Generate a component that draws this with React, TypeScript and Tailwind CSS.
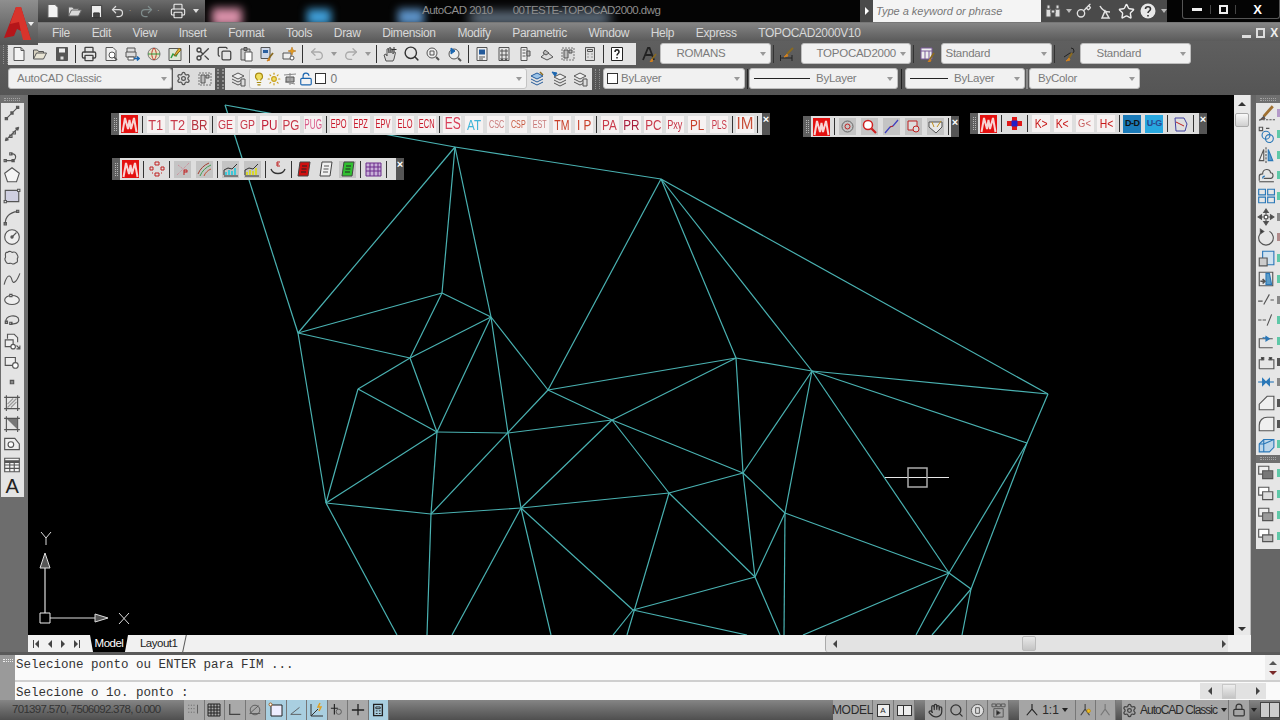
import React from "react";
import { Search, Scissors, Copy, Undo2, Redo2, Printer, Lightbulb, Sun, LockOpen, Settings, Star, Key, Hand, Lock } from "lucide-react";

const S = ({ children, size = 16, box = "0 0 16 16" }: { children: React.ReactNode; size?: number; box?: string }) => (
  <svg width={size} height={size} viewBox={box} fill="none" stroke="#555" strokeWidth="1" className="shrink-0">
    {children}
  </svg>
);

const Doc = () => <S><path d="M3 1.5h7l3 3v10H3z" fill="#f4f4f4" /><path d="M10 1.5v3h3" /></S>;
const Folder = () => <S><path d="M1.5 13V4h4l1 1.5h5V7" fill="#d8d2c0" /><path d="M1.5 13l3-6h10l-3 6z" fill="#e8e4d4" /></S>;
const Floppy = () => <S><path d="M2.5 1.5h11v13h-11z" fill="#555" /><path d="M4.5 2v5h7V2z" fill="#eee" /><path d="M6 10h4v4H6z" fill="#ddd" /></S>;
const Preview = () => <S><path d="M3 1.5h7l3 3v10H3z" fill="#f0f0f0" /><circle cx="9" cy="9" r="3" fill="#fff" /><path d="M11 11l3 3" strokeWidth="1.6" /></S>;
const Publish = () => <S><path d="M3 6V2h8v4M2 6h10v5H2z" fill="#ddd" /><path d="M4 11h6v3H4z" fill="#fff" /><path d="M10 12.5h5M13 10.5l2 2-2 2" stroke="#1b66b0" strokeWidth="1.6" /></S>;
const Globe = () => <S><circle cx="8" cy="8" r="6" fill="#e9e2c6" stroke="#777" /><path d="M8 2c-3 3-3 9 0 12M8 2c3 3 3 9 0 12" stroke="#c0392b" /><path d="M2 8h12" stroke="#2f9c3f" /></S>;
const Markup = () => <S><path d="M2 2.5h12v12H2z" fill="#dfe8d8" stroke="#555" /><path d="M4 12l2-4 3 2 4-7" stroke="#2f9c3f" strokeWidth="1.5" /><path d="M12 2l2 2-5 5-2 1 1-2z" fill="#e0b030" stroke="#8a6a20" /></S>;
const Paste = () => <S><path d="M3 3h9v11H3z" fill="#ccc" /><path d="M6 1.5h3v3H6z" fill="#888" /><path d="M7 6h7v9H7z" fill="#fff" /></S>;
const Match = () => <S><path d="M2 1.5h9v11H2z" fill="#cfd8e8" /><path d="M4 4h5v3H4z" fill="#2a5fa0" stroke="none" /><path d="M14 7l-4 5" stroke="#8a6a20" strokeWidth="1.8" /><path d="M10 12l-2 3 3-1z" fill="#d08020" stroke="#d08020" /></S>;
const Block = () => <S><path d="M2 7h8v6H2z" fill="#eee" /><circle cx="11" cy="12" r="2" fill="#fff" /><path d="M11 1l1 3 3 1-3 1-1 3-1-3-3-1 3-1z" fill="#e09a20" stroke="#b06a10" strokeWidth=".5" /></S>;
const PanRT = () => <S><path d="M4 15L2 9l2-1 1 2V3l1.500-.5L7 7V2l1.500-.5L9 7V3l1.500 0L11 8l1-2 1.500.5L12 13l-1 2z" fill="#d8d8d8" /><path d="M12 1v5M9.500 3.500h5" stroke="#333" /></S>;
const ZoomW = () => <S><circle cx="7" cy="7" r="5" fill="#eee" /><path d="M5 5h4v4H5z" /><path d="M11 11l3 3" strokeWidth="2" /></S>;
const ZoomP = () => <S><circle cx="7" cy="8" r="5" fill="#eee" /><path d="M11 12l3 3" strokeWidth="2" /><path d="M4 2l4 3-4 3z" fill="#1b66b0" stroke="#1b66b0" /></S>;
const Props = () => <S><path d="M3 1.500h10v13H3z" fill="#eee" /><path d="M5 3.500h6v5H5z" fill="#245a9a" stroke="none" /><path d="M5 11h6M5 13h4" /></S>;
const Grid = () => <S><path d="M3 1.500h10v13H3zM5 4h2v2H5zM9 4h2v2H9zM5 8h2v2H5zM9 8h2v2H9zM5 12h2v1.500H5zM9 12h2v1.500H9z" fill="#e4e4e4" /></S>;
const Palette = () => <S><path d="M4 1.500h6v13H4z" fill="#eee" /><path d="M10 5h3v5h-3z" fill="#bbb" /><path d="M5.500 4h3M5.500 7h3M5.500 10h3" /></S>;
const Sheet = () => <S><path d="M2 11l6-5 6 5-6 3z" fill="#ddd" /><path d="M6 4l4 3-3 2-3-2z" fill="#bbb" /></S>;
const Calc = () => <S><path d="M3.500 1.500h9v13h-9z" fill="#ddd" /><path d="M5.500 3.500h5v2h-5zM5.500 8h1M9.500 8h1M5.500 11h1M9.500 11h1" /></S>;
const Help = () => <S><path d="M2.500 1.500h11v13h-11z" fill="#fff" stroke="#222" /><path d="M6 6c0-3 4-3 4 0 0 1.500-2 1.500-2 3.500M8 11v1.500" stroke="#222" strokeWidth="1.500" /></S>;
const TextStyle = () => <S><path d="M2 14L7 2h1.500L13 14M4.500 9h6" stroke="#222" strokeWidth="1.800" /><path d="M15 8l-4 5" stroke="#8a6a20" strokeWidth="1.600" /><path d="M11 13l-2 3 3-1z" fill="#d08020" stroke="#d08020" /></S>;
const DimStyle = () => <S><path d="M1.500 9v6M13 9v6M2 12h11" stroke="#222" /><path d="M14 2l-6 6" stroke="#8a6a20" strokeWidth="2" /><path d="M8 8l-3 3 4-1z" fill="#d08020" stroke="#d08020" /></S>;
const TableStyle = () => <S><path d="M2 2h11v11H2zM2 5h11M6 5v8M10 5v8" fill="#eee" stroke="#7a5a9a" /><path d="M15 7l-4 6" stroke="#8a6a20" strokeWidth="1.800" /><path d="M11 13l-2 3 3-1z" fill="#d08020" stroke="#d08020" /></S>;
const MleaderStyle = () => <S><path d="M11 2a3 3 0 0 1 3 3c0 2-2 3-4 2L4 11" stroke="#222" /><path d="M12 7l-3 5" stroke="#8a6a20" strokeWidth="2" /><path d="M9 12l-3 3 4-1z" fill="#d08020" stroke="#d08020" /></S>;
const Workspace = () => <S><path d="M2 2h12v12H2z" stroke="#777" strokeDasharray="2 1" fill="#ddd" /><path d="M4 4h4v8H4zM9 4h3v3H9z" fill="#bbb" /></S>;
const LayerP = () => <S><path d="M2 5l6-3 6 3-6 3z" fill="#eee" /><path d="M2 8l6 3 6-3M2 11l6 3 6-3" /><path d="M11 8h4v7h-4z" fill="#ddd" /></S>;
const LayerA = () => <S><path d="M2 5l6-3 6 3-6 3z" fill="#9cc4e8" stroke="#245a9a" /><path d="M2 8l6 3 6-3M2 11l6 3 6-3" stroke="#245a9a" /><path d="M11 1l3 3" stroke="#8a6a20" strokeWidth="1.500" /></S>;
const LayerB = () => <S><path d="M3 6l6-3 6 3-6 3z" fill="#eee" /><path d="M3 9l6 3 6-3M3 12l6 3 6-3" /><path d="M1 1l5 1-2 3z" fill="#1b66b0" stroke="#1b66b0" /></S>;
const Freeze = () => <S><path d="M4 6h8v5H4z" fill="#aaa" /><path d="M2 4l12-1M8 2v12M3 11l10 2" stroke="#888" /></S>;

const PLAIN = "w-[21.5px] h-full flex items-center justify-center shrink-0";

const Btn = ({ children }: { children: React.ReactNode }) => <div className={PLAIN}>{children}</div>;
const Sep = () => (
  <div className="w-[6px] h-full flex items-center justify-center shrink-0">
    <div className="w-px h-[18px] bg-[#333]" />
  </div>
);
const Caret = ({ w = "w-[12px]", color = "border-t-[#999]" }: { w?: string; color?: string }) => (
  <div className={`${w} h-full flex items-center justify-center shrink-0`}>
    <div className={`w-0 h-0 border-l-[3px] border-r-[3px] border-t-[4px] border-l-transparent border-r-transparent ${color}`} />
  </div>
);

const Combo = ({ w, children, align = "pl-2" }: { w: string; children: React.ReactNode; align?: string }) => (
  <div className={`${w} h-[21px] shrink-0 bg-[#f1f1f1] rounded-[3px] border border-[#bdbdbd] flex items-center text-[11.500px] tracking-[-0.25px] text-[#7b7b7b] ${align}`}>
    <div className="flex-1 flex items-center min-w-0 whitespace-nowrap">{children}</div>
    <Caret w="w-[14px]" />
  </div>
);

const Grip = () => <div className="w-[5px] h-[20px] shrink-0 border-x border-dotted border-[#8f8f8f]" />;

const QuickIcon = ({ children }: { children: React.ReactNode }) => <div className="w-[21.700px] h-full flex items-center justify-center shrink-0">{children}</div>;

const TitleBar = () => (
  <div className="relative h-[23px] shrink-0 bg-[#040404] flex items-center overflow-hidden border-b border-[#777]">
    <div className="absolute left-[212px] top-[8px] w-[30px] h-[18px] bg-[#d88fa8] blur-[4px]" />
    <div className="absolute left-[307px] top-[9px] w-[24px] h-[16px] bg-[#3f9ed8] blur-[4px]" />
    <div className="absolute left-[398px] top-[9px] w-[26px] h-[16px] bg-[#5d93c8] blur-[4px]" />
    <div className="absolute left-[470px] top-[12px] w-[140px] h-[12px] bg-[#6d7e90] blur-[6px]" />
    <div className="ml-[38px] w-[167px] h-[22px] shrink-0 bg-gradient-to-b from-[#6c6c6c] to-[#3b3b3b] flex items-center pl-[4px]">
      <QuickIcon><svg width="16" height="16" viewBox="0 0 16 16" fill="#f3f3f3" stroke="#666"><path d="M3 1.500h7l3 3v10H3z" /></svg></QuickIcon>
      <QuickIcon><svg width="16" height="16" viewBox="0 0 16 16" fill="#d9d9d9" stroke="#666"><path d="M1.500 13V4h4l1 1.500h5V7M1.500 13l3-6h10l-3 6z" /></svg></QuickIcon>
      <QuickIcon><svg width="15" height="15" viewBox="0 0 16 16" fill="#ececec" stroke="#333"><path d="M2.500 1.500h11v13h-11z" /><path d="M5 9.500h6v5H5z" fill="#444" /></svg></QuickIcon>
      <QuickIcon><Undo2 size={15} color="#dcdcdc" strokeWidth={2} /></QuickIcon>
      <div className="w-[6.500px] text-[8px] text-[#aaa] leading-none">·</div>
      <QuickIcon><Redo2 size={15} color="#7f8c8c" strokeWidth={2} /></QuickIcon>
      <div className="w-[10px] text-[8px] text-[#aaa] leading-none">·</div>
      <QuickIcon><Printer size={16} color="#f0f0f0" strokeWidth={1.6} /></QuickIcon>
      <div className="w-0 h-0 ml-[4px] border-l-[3px] border-r-[3px] border-t-[4px] border-l-transparent border-r-transparent border-t-[#ddd]" />
    </div>
    <div className="relative ml-[217px] w-[240px] whitespace-nowrap text-[11.500px] text-[#8e8e8e] flex">
      <span className="tracking-[-0.5px]">AutoCAD 2010</span>
      <span className="ml-[20px] tracking-[-0.55px]">00TESTE-TOPOCAD2000.dwg</span>
    </div>
    <div className="relative ml-[198px] w-[307px] h-[22px] shrink-0 bg-[#4a4a4a] flex items-center">
      <div className="w-[13px] flex justify-center">
        <div className="w-0 h-0 border-y-[4px] border-l-[4px] border-y-transparent border-l-white" />
      </div>
      <div className="w-[168px] h-full bg-[#f4f4f4] flex items-center pl-[3px] text-[11px] italic text-[#777] whitespace-nowrap">Type a keyword or phrase</div>
      <div className="flex items-center flex-1 pl-[3px] gap-[4px] text-[#e6e6e6]">
        <svg width="18" height="16" viewBox="0 0 18 16" fill="#ddd" stroke="#555"><path d="M2 6h5v8H2zM11 6h5v8h-5zM3 2h3v4H3zM12 2h3v4h-3zM7 7h4v3H7z" /></svg>
        <Caret w="w-[6px]" color="border-t-[#bbb]" />
        <Key size={16} color="#e2e2e2" />
        <svg width="18" height="18" viewBox="0 0 18 18" fill="none" stroke="#e2e2e2" strokeWidth="1.500"><path d="M4 4c2 4 6 6 10 6M9 9l-3 7h7z" /></svg>
        <Star size={17} color="#eee" strokeWidth={2} />
        <svg width="18" height="18" viewBox="0 0 18 18"><circle cx="9" cy="9" r="7.500" fill="#e8e8e8" /><path d="M6.500 7c0-3 5-3 5 0 0 2-2.500 2-2.500 4M9 13v1.500" stroke="#333" strokeWidth="1.600" fill="none" /></svg>
        <Caret w="w-[6px]" color="border-t-[#bbb]" />
      </div>
    </div>
    <div className="relative ml-[15px] w-[98px] h-[19px] self-start shrink-0 border border-[#555] border-t-0 rounded-b-[3px] flex items-center text-white">
      <div className="w-[27px] flex justify-center"><div className="w-[10px] h-[3px] bg-[#eee]" /></div>
      <div className="w-[26px] flex justify-center border-x border-[#444]"><div className="w-[9px] h-[9px] border-2 border-[#eee]" /></div>
      <div className="flex-1 text-center text-[13px] font-bold leading-none">X</div>
    </div>
  </div>
);

const MENU = ["File", "Edit", "View", "Insert", "Format", "Tools", "Draw", "Dimension", "Modify", "Parametric", "Window", "Help", "Express", "TOPOCAD2000V10"];

const MenuBar = () => (
  <div className="h-[18px] shrink-0 pt-[2px] bg-gradient-to-b from-[#858585] to-[#5b5b5b] flex items-center pl-[52px] gap-[21.700px] text-[12px] tracking-[-0.35px] text-[#d8d8d8]">
    {MENU.map((m) => <span key={m}>{m}</span>)}
    <div className="ml-auto mr-[2px] flex items-center gap-[5px]">
      <div className="w-[9px] h-[3px] bg-[#ddd] mt-[7px]" />
      <div className="w-[9px] h-[10px] border-2 border-[#ddd]" />
      <div className="text-[12px] font-bold text-[#eee] leading-none">X</div>
    </div>
  </div>
);

const Row1 = () => (
  <div className="h-[25px] flex items-center pl-[3px]">
    <Grip />
    <div className="h-[22px] flex items-center bg-[#e4e4e4] w-[628px] shrink-0">
      <Btn><Doc /></Btn><Btn><Folder /></Btn><Btn><Floppy /></Btn>
      <Sep />
      <Btn><Printer size={16} color="#444" /></Btn><Btn><Preview /></Btn><Btn><Publish /></Btn><Btn><Globe /></Btn><Btn><Markup /></Btn>
      <Sep />
      <Btn><Scissors size={16} color="#444" /></Btn><Btn><Copy size={15} color="#444" /></Btn><Btn><Paste /></Btn><Btn><Match /></Btn><Btn><Block /></Btn>
      <Sep />
      <div className="w-[22px] h-full flex items-center justify-center"><Undo2 size={16} color="#aaa" /></div>
      <Caret />
      <div className="w-[22px] h-full flex items-center justify-center"><Redo2 size={16} color="#aaa" /></div>
      <Caret />
      <Sep />
      <Btn><PanRT /></Btn><Btn><Search size={17} color="#333" strokeWidth={2} /></Btn><Btn><ZoomW /></Btn><Btn><ZoomP /></Btn>
      <Sep />
      <Btn><Props /></Btn><Btn><Grid /></Btn><Btn><Palette /></Btn><Btn><Sheet /></Btn><Btn><Workspace /></Btn><Btn><Calc /></Btn>
      <Sep />
      <Btn><Help /></Btn>
    </div>
    <div className="w-[2px] shrink-0" />
    <Btn><TextStyle /></Btn>
    <Combo w="w-[111px]" align="pl-[16px]">ROMANS</Combo>
    <Sep />
    <Btn><DimStyle /></Btn>
    <div className="w-[2.500px] shrink-0" />
    <Combo w="w-[110px]" align="pl-[15px]">TOPOCAD2000</Combo>
    <Sep />
    <Btn><TableStyle /></Btn>
    <div className="w-[2.500px] shrink-0" />
    <Combo w="w-[111px]" align="pl-[4px]">Standard</Combo>
    <Sep />
    <Btn><MleaderStyle /></Btn>
    <div className="w-[0.500px] shrink-0" />
    <Combo w="w-[111px]" align="pl-[16px]">Standard</Combo>
  </div>
);

const LineSample = ({ w }: { w: string }) => <div className={`${w} h-px bg-[#222] mr-[6px] shrink-0`} />;

const Row2 = () => (
  <div className="h-[25px] flex items-center pl-[8px]">
    <Combo w="w-[164px]">AutoCAD Classic</Combo>
    <div className="h-[22px] w-[42px] bg-[#dcdcdc] flex items-center justify-center gap-[6px] mx-[1px]">
      <Settings size={15} color="#555" />
      <Workspace />
    </div>
    <div className="w-[7px] h-[20px] mx-[1px] border-x-2 border-dotted border-[#8f8f8f] shrink-0" />
    <div className="h-[22px] w-[367px] shrink-0 bg-[#e2e2e2] flex items-center pl-[2px]">
      <Btn><LayerP /></Btn>
      <div className="w-[278px] h-[21px] shrink-0 bg-[#f3f3f3] rounded-[3px] border border-[#c4c4c4] flex items-center pl-[2px] gap-[1px] text-[12px] text-[#777]">
        <Lightbulb size={14} color="#a88a10" fill="#f0df60" />
        <Sun size={14} color="#c8a020" fill="#f0df60" />
        <Freeze />
        <LockOpen size={14} color="#1b66b0" />
        <div className="w-[11px] h-[11px] bg-white border border-[#333] ml-[1px]" />
        <span className="ml-[4px]">0</span>
        <div className="flex-1" />
        <Caret w="w-[14px]" />
      </div>
      <Btn><LayerA /></Btn><Btn><LayerB /></Btn><Btn><LayerP /></Btn>
    </div>
    <div className="w-[5px] h-[20px] mx-[3px] border-x border-dotted border-[#8f8f8f] shrink-0" />
    <Combo w="w-[142px]" align="pl-[3px]">
      <div className="w-[11px] h-[11px] bg-white border border-[#333] mr-[3px]" />ByLayer
    </Combo>
    <div className="w-px h-[20px] bg-[#222] mx-[1.500px] shrink-0" />
    <Combo w="w-[149px]" align="pl-[4px]"><LineSample w="w-[56px]" />ByLayer</Combo>
    <div className="w-px h-[20px] bg-[#222] mx-[3px] shrink-0" />
    <Combo w="w-[120px]" align="pl-[4px]"><LineSample w="w-[38px]" />ByLayer</Combo>
    <div className="w-[2px] h-[20px] bg-[#888] mx-[1px] shrink-0" />
    <Combo w="w-[111px]" align="pl-[8px]">ByColor</Combo>
  </div>
);

const L = (d: string, extra?: React.ReactNode) => (
  <S size={18}><path d={d} />{extra}</S>
);

const LEFT_ICONS: React.ReactNode[] = [
  L("M2.500 13.500L13.500 2.500M2 12h2v2H2zM7 7h2v2H7zM12 2h2v2h-2z"),
  L("M2 14L14 2M2 14l1-3M2 14l3-1M14 2l-3 1M14 2l-1 3M6 9h2v2H6zM9 6h2v2H9z"),
  L("M2 13h5a3 3 0 0 0 2-6H7M1 12h2v2H1zM6 6h2v2H6zM8 12h2v2H8z"),
  <S size={18}><path d="M8 1.500l6.500 5-2.500 7.500H4L1.500 6.500z" fill="#f5f5f5" /></S>,
  <S size={18}><path d="M2 3h12v10H2z" fill="#cfcfe0" /><path d="M1 12h2v2H1zM13 2h2v2h-2z" fill="#fff" /></S>,
  L("M2 14C2 8 6 4 13 3M1 13h2v2H1zM12 2h2v2h-2z"),
  <S size={18}><circle cx="8" cy="8" r="6.500" fill="#eee" /><path d="M8 8l4-4" /><circle cx="8" cy="8" r="1" fill="#555" /></S>,
  L("M4 3c2-2 4 0 4 0s3-1 4 1 2 3 1 4 1 3-1 4-3 2-4 1-4 1-5-1-2-3-1-4-1-4 1-5z"),
  L("M1 13C4 2 7 5 8 9s4 2 7-6"),
  <S size={18}><ellipse cx="8" cy="8" rx="6.500" ry="4" fill="#eee" /><path d="M6 3h2v2H6z" fill="#fff" /></S>,
  L("M3 10C0 4 14 2 14 8c0 3-4 4-7 3M2 9h2v2H2zM6 10h2v2H6z"),
  <S size={18}><path d="M4 6V2h6l3 3v4M2 7h7v6H2z" fill="#eee" /><circle cx="9" cy="13" r="2" fill="#fff" /><path d="M12 12l3 3M15 12v3h-3" /></S>,
  <S size={18}><path d="M2 4h9v7H2z" fill="#eee" /><circle cx="11" cy="11" r="2.500" fill="#fff" /></S>,
  <S size={18}><path d="M6.500 6.500h3v3h-3z" fill="#888" /></S>,
  <S size={18}><path d="M3 3h10v10H3zM1 3h14M1 13h14M3 1v14M13 1v14" /><path d="M4 9l5-5M4 12l8-8M7 12l5-5" stroke="#999" /></S>,
  <S size={18}><path d="M3 3h10v10H3zM1 3h14M1 13h14M3 1v14M13 1v14" /><path d="M3.500 3.500h9v9z" fill="#777" stroke="none" /></S>,
  <S size={18}><path d="M1.500 3h9l4 5v5h-13z" fill="#eee" /><circle cx="7" cy="8.500" r="2.500" fill="#fff" /></S>,
  <S size={18}><path d="M1.500 2h13v12h-13z" fill="#f5f5f5" /><path d="M1.500 5h13" strokeWidth="2.500" /><path d="M1.500 8h13M1.500 11h13M6 5v9M10 5v9" /></S>,
  <span className="text-[20px] leading-none text-[#222]">A</span>,
];

const Handle = ({ horizontal }: { horizontal?: boolean }) =>
  horizontal ? (
    <div className="h-[8px] w-full flex items-center justify-center bg-[#6f6f6f]">
      <div className="w-[16px] h-[3px] border-y border-dotted border-[#a4a4a4]" />
    </div>
  ) : (
    <div className="w-[8px] h-full shrink-0 bg-[#5f5f5f] flex items-center justify-center">
      <div className="w-[3px] h-[13px] border-x border-dotted border-[#b5b5b5]" />
    </div>
  );

const LeftBar = () => (
  <div className="w-[28px] shrink-0 bg-[#6d6d6d] flex flex-col pr-[4.500px] pl-[1px]">
    <Handle horizontal />
    <div className="h-[394px] bg-[#e4e4e4] flex flex-col items-center">
      {LEFT_ICONS.map((ic, i) => (
        <div key={i} className="h-[20.700px] w-full flex items-center justify-center">{ic}</div>
      ))}
    </div>
  </div>
);

// second column of the right bars is cut by the window edge
const Edge = ({ c }: { c: string }) => <div className={`w-[3px] h-[8px] shrink-0 ${c}`} />;

const RIGHT_TOP: [React.ReactNode, string][] = [
  [<S size={18}><path d="M2 14h14" strokeDasharray="2 1" /><path d="M14 2L6 11" stroke="#a07030" strokeWidth="2.500" /><path d="M6 11l-3 3 4-1z" fill="#b8391c" /></S>, "bg-[#b49ac8]"],
  [<S size={18}><path d="M2 2h3v3H2zM8 3h3" /><circle cx="8" cy="9" r="3.500" stroke="#2a78b8" /><circle cx="11" cy="12" r="3.500" stroke="#2a78b8" /></S>, "bg-[#5fc8a8]"],
  [<S size={18}><path d="M8 1v15" strokeDasharray="2 1" /><path d="M6 3v10H2z" fill="#eee" /><path d="M10 3v10h4z" fill="#5a9cc8" stroke="#2a78b8" /></S>, "bg-[#5fc8a8]"],
  [<S size={18}><path d="M2 13V9c0-2 2-2 3-2 0-5 7-5 7-1 3 0 3 5 0 5H6" /><path d="M2 14h13" /><path d="M5 11c0-2 1-2 2-2" stroke="#2a78b8" /></S>, "bg-[#5fc8a8]"],
  [<S size={18}><path d="M1.500 2h6v5h-6zM9.500 2h6v5h-6zM1.500 9h6v5h-6zM9.500 9h6v5h-6z" stroke="#2a78b8" /></S>, "bg-[#5fc8a8]"],
  [<S size={18}><path d="M8 1v14M1 8h14M8 1L6 4h4zM8 15l-2-3h4zM1 8l3-2v4zM15 8l-3-2v4z" fill="#333" /><path d="M6.500 6.500h3v3h-3z" fill="#fff" /></S>, "bg-[#888]"],
  [<S size={18}><path d="M11 3a6.500 6.500 0 1 1-6 0" /><path d="M3 1l3 2-3 2z" fill="#333" /></S>, "bg-[#b08a8a]"],
  [<S size={18}><path d="M5 2h10v12H5z" stroke="#2a78b8" fill="#cfe2f0" /><path d="M2 8h7v7H2z" fill="#ccc" /></S>, "bg-[#5fc8a8]"],
  [<S size={18}><path d="M2 2h12v12H2z" /><path d="M8 3h3l2 10H8z" fill="#5a9cc8" stroke="#2a78b8" /><path d="M3 10h4M5 8l2 2-2 2" strokeWidth="1.500" /></S>, "bg-[#5fc8a8]"],
  [L("M1 9h4M6 12l5-9M12 8h3"), "bg-[#888]"],
  [L("M1 8h3M5 8h3M9 13l4-10"), "bg-[#5fc8a8]"],
  [<S size={18}><path d="M2 14V6h12M2 14h12" /><path d="M5 5l5 1M8 4l3 2-3 2z" fill="#2a78b8" stroke="#2a78b8" /></S>, "bg-[#5fc8a8]"],
  [<S size={18}><path d="M2 14V6h4M10 6h5v8H2" /><path d="M4 4h2v2H4zM11 4h2v2h-2z" fill="#333" /></S>, "bg-[#555]"],
  [<S size={18}><path d="M1 8h14" stroke="#2a78b8" /><path d="M5 5l3 3-3 3zM11 5L8 8l3 3z" fill="#2a78b8" stroke="#2a78b8" /></S>, "bg-[#888]"],
  [<S size={18}><path d="M2 14V9l7-7h6v12z" fill="#f0f0f0" /></S>, "bg-[#555]"],
  [<S size={18}><path d="M2 14v-5c0-4 3-7 7-7h6v12z" fill="#f0f0f0" /></S>, "bg-[#555]"],
  [<S size={18}><path d="M2 8l4-4h9v7l-4 4H2z" fill="#bcd6ea" stroke="#2a78b8" /><path d="M6 4v4H2M6 8l9-4M6 8v7" stroke="#2a78b8" /></S>, "bg-[#5fc8a8]"],
];

const RIGHT_BOTTOM = [
  <S size={18}><path d="M1.500 2h9v7h-9z" fill="#eee" /><path d="M5 6h9v7H5z" fill="#777" /></S>,
  <S size={18}><path d="M1.500 2h9v7h-9z" fill="#fff" /><path d="M5 6h9v7H5z" fill="#ddd" /></S>,
  <S size={18}><path d="M1.500 2h9v7h-9z" fill="#eee" /><path d="M5 6h9v7H5z" fill="#999" /></S>,
  <S size={18}><path d="M1.500 2h9v7h-9z" fill="#fff" /><path d="M5 7h9v6H5z" fill="#bbb" /></S>,
];

const RightBar = () => (
  <div className="w-[29px] shrink-0 bg-[#666] pl-[5px] flex flex-col">
    <div className="bg-[#e6e6e6]">
      <Handle horizontal />
      {RIGHT_TOP.map(([ic, c], i) => (
        <div key={i} className="h-[20.700px] flex items-center justify-between pl-[1px]">{ic}<Edge c={c} /></div>
      ))}
    </div>
    <div className="bg-[#e6e6e6] pb-[2px]">
      <Handle horizontal />
      {RIGHT_BOTTOM.map((ic, i) => (
        <div key={i} className="h-[21px] flex items-center justify-between pl-[1px]">{ic}<Edge c="bg-[#5fc8a8]" /></div>
      ))}
    </div>
  </div>
);

const TIN: [number, number, number, number][] = [
  [225, 105, 455, 147], [225, 105, 298, 333], [455, 147, 661, 179], [661, 179, 1048, 394], [298, 333, 455, 147],
  [455, 147, 442, 293], [455, 147, 491, 317], [661, 179, 548, 390], [661, 179, 736, 358], [661, 179, 812, 371],
  [298, 333, 442, 293], [442, 293, 491, 317], [442, 293, 410, 358], [298, 333, 410, 358], [410, 358, 491, 317],
  [410, 358, 437, 432], [491, 317, 437, 432], [491, 317, 548, 390], [491, 317, 508, 433], [298, 333, 326, 503],
  [358, 389, 410, 358], [358, 389, 437, 432], [358, 389, 326, 503], [326, 503, 437, 432], [437, 432, 508, 433],
  [437, 432, 431, 514], [326, 503, 431, 514], [508, 433, 612, 420], [548, 390, 431, 514], [548, 390, 736, 358],
  [548, 390, 612, 420], [612, 420, 736, 358], [612, 420, 743, 473], [612, 420, 521, 508], [508, 433, 521, 508],
  [431, 514, 521, 508], [521, 508, 669, 493], [612, 420, 669, 493], [669, 493, 743, 473], [736, 358, 743, 473],
  [736, 358, 812, 371], [812, 371, 743, 473], [812, 371, 785, 513], [812, 371, 1048, 394], [812, 371, 1027, 443],
  [812, 371, 949, 573], [1048, 394, 1027, 443], [1027, 443, 971, 589], [971, 589, 962, 635], [949, 573, 1027, 443],
  [949, 573, 916, 635], [743, 473, 785, 513], [743, 473, 755, 577], [669, 493, 755, 577], [669, 493, 627, 635],
  [755, 577, 633, 610], [785, 513, 755, 577], [785, 513, 784, 635], [785, 513, 949, 573], [949, 573, 803, 635],
  [755, 577, 780, 635], [633, 610, 747, 635], [633, 610, 613, 635], [521, 508, 633, 610], [521, 508, 452, 635],
  [521, 508, 551, 635], [431, 514, 427, 635], [326, 503, 397, 635], [949, 573, 971, 589], [971, 589, 932, 635],
];

const Drawing = () => (
  <svg width="1206" height="540" viewBox="28 95 1206 540" className="block">
    {TIN.map(([a, b, c, d], i) => (
      <line key={i} x1={a} y1={b} x2={c} y2={d} stroke="#4ab2b2" strokeWidth="1.200" />
    ))}
    <path d="M45 613V568M50 618H95" stroke="#ddd" strokeWidth="1.200" fill="none" />
    <path d="M40 613h10v10H40z" stroke="#eee" fill="none" />
    <path d="M45 553l-5 15h10zM108 618l-13-4v8z" fill="#555" stroke="#ddd" />
    <path d="M41 532l5 6 5-6M46 538v7M119 613l10 11M129 613l-10 11" stroke="#ddd" fill="none" />
    <path d="M885 477.500h64" stroke="#e8e8e8" />
    <path d="M908 468h19v19h-19z" stroke="#aaa" strokeWidth="1.500" fill="none" />
  </svg>
);

const WLogo = () => (
  <svg width="17" height="18" viewBox="0 0 17 18" className="shrink-0">
    <path d="M0 0h17v18H0z" fill="#e4100f" />
    <path d="M1.500 17L4 3l3 11 1.500-9 1.500 9 3-11 2.500 14" fill="none" stroke="#f8d4d4" strokeWidth="2" />
  </svg>
);

type Item = { t?: string; c?: string; s?: string; i?: React.ReactNode };

const TextCell = ({ it }: { it: Item }) => (
  <div className="w-[21.900px] h-full flex items-center justify-center shrink-0">
    {it.i ?? (
      <div className="w-[18px] h-[17px] bg-[#f6f2f2] flex items-center justify-center">
        <span className={`inline-block leading-none whitespace-nowrap ${it.c ?? "text-[#c8394a]"} ${it.s ?? "text-[15px] scale-x-[.78]"}`}>{it.t}</span>
      </div>
    )}
  </div>
);
const FSep = () => <div className="w-[1px] h-[17px] bg-[#333] mx-[1.500px] shrink-0" />;

const Floating = ({ className, groups }: { className: string; groups: Item[][] }) => (
  <div className={`absolute flex bg-[#dedede] ${className}`}>
    <Handle />
    <div className="flex items-center flex-1">
      {groups.map((g, i) => (
        <React.Fragment key={i}>
          {g.map((it, j) => <TextCell key={j} it={it} />)}
          <FSep />
        </React.Fragment>
      ))}
    </div>
    <div className="w-[8px] shrink-0 bg-[#555] flex items-start justify-center text-[11px] font-bold text-white leading-[12px]">×</div>
  </div>
);

const sm = "text-[12px] scale-x-[.62]";
const md = "text-[13px] scale-x-[.8]";

const BAR1: Item[][] = [
  [{ i: <WLogo /> }],
  [{ t: "T1", s: "text-[15px] scale-x-[.85]" }, { t: "T2", s: "text-[15px] scale-x-[.85]" }, { t: "BR", c: "text-[#b5303c]" }],
  [{ t: "GE", s: md }, { t: "GP", s: md }, { t: "PU", c: "text-[#c2203a]" }, { t: "PG" }, { t: "PUG", c: "text-[#d85a88]", s: "text-[14px] scale-x-[.58]" }],
  [{ t: "EPO", s: sm, c: "text-[#c9182a]" }, { t: "EPZ", s: sm, c: "text-[#c9182a]" }, { t: "EPV", s: sm, c: "text-[#c9182a]" }, { t: "ELO", s: sm, c: "text-[#c9182a]" }, { t: "ECN", s: sm, c: "text-[#c9182a]" }],
  [{ t: "ES", s: "text-[16px] scale-x-[.75]", c: "text-[#d8405a]" }, { t: "AT", c: "text-[#3fb4d8]" }, { t: "CSC", s: "text-[11px] scale-x-[.65]", c: "text-[#c87878]" }, { t: "CSP", s: "text-[11px] scale-x-[.65]", c: "text-[#c85a40]" }, { t: "EST", s: "text-[11px] scale-x-[.65]", c: "text-[#c87878]" }, { t: "TM", s: "text-[15px] scale-x-[.7]", c: "text-[#c8402a]" }, { t: "I P", c: "text-[#c8402a]" }],
  [{ t: "PA" }, { t: "PR", c: "text-[#a81c3c]" }, { t: "PC" }, { t: "Pxy", s: "text-[13px] scale-x-[.7]" }, { t: "PL", c: "text-[#c8402a]" }, { t: "PLS", s: "text-[13px] scale-x-[.62]" }],
  [{ t: "IM", s: "text-[16px] scale-x-[.95]", c: "text-[#c8503a]" }],
];

const Cluster = () => <svg width="16" height="16" viewBox="0 0 16 16" fill="none" stroke="#c02020"><path d="M6 1h4v3H6zM1 6h3v3H1zM12 6h3v3h-3zM6 12h4v3H6zM3 12h1M12 12h1" /></svg>;
const Sq = ({ children }: { children: React.ReactNode }) => <div className="w-[17px] h-[17px] bg-[#c4c4c4] flex items-center justify-center">{children}</div>;
const Scroll = ({ c }: { c: string }) => <svg width="14" height="16" viewBox="0 0 14 16"><path d="M3 1h10l-2 14H1z" fill={c} stroke="#444" /><path d="M5 5h5M4.500 8h5M4 11h5" stroke={c === "#f0f0f0" ? "#555" : "#222"} /></svg>;

const BAR2: Item[][] = [
  [{ i: <WLogo /> }],
  [{ i: <Cluster /> }],
  [
    { i: <Sq><svg width="14" height="14" viewBox="0 0 14 14" stroke="#d08090" fill="none"><path d="M1 13L13 1M2 3l10 8" strokeDasharray="1 1" /><path d="M8 13V8h3v2H8" stroke="#c02020" /></svg></Sq> },
    { i: <Sq><svg width="15" height="15" viewBox="0 0 15 15" fill="none" stroke="#a04030"><path d="M1 12C3 7 7 3 12 1" /><path d="M3 14C5 9 9 5 14 3" stroke="#40a050" /><path d="M7 14c1-3 4-6 7-7" stroke="#c05030" /></svg></Sq> },
  ],
  [
    { i: <Sq><svg width="16" height="16" viewBox="0 0 16 16" fill="none"><path d="M1 15h14M1 14V9l4-2 4 1 5-5" stroke="#333" /><path d="M3 14V11M6 14V9M9 14v-4M12 14V7" stroke="#40c8d8" strokeWidth="2" /></svg></Sq> },
    { i: <Sq><svg width="16" height="16" viewBox="0 0 16 16" fill="none"><path d="M1 15h14M1 14V9l4-2 4 1 5-5" stroke="#333" /><path d="M3 14V11M6 14V9M9 14v-4M12 14V7" stroke="#d8d830" strokeWidth="2" /></svg></Sq> },
  ],
  [{ i: <svg width="16" height="16" viewBox="0 0 16 16" fill="none"><path d="M1 8c2 6 12 6 14 0" stroke="#333" strokeWidth="1.300" /><path d="M7 1h3M7 3h2M7 5h3M7 1v4" stroke="#c02020" /></svg> }],
  [{ i: <Scroll c="#d01010" /> }, { i: <Scroll c="#f0f0f0" /> }, { i: <Sq><Scroll c="#30c030" /></Sq> }],
  [{ i: <svg width="17" height="15" viewBox="0 0 17 15" stroke="#6a2a8a" fill="#c8b0d8"><path d="M1 1h15v13H1z" /><path d="M1 5h15M1 9h15M5 1v13M9 1v13M13 1v13" /></svg> }],
];

const BAR3: Item[][] = [
  [{ i: <WLogo /> }],
  [
    { i: <Sq><svg width="13" height="13" viewBox="0 0 13 13" fill="none" stroke="#c02020"><circle cx="6.500" cy="6.500" r="5.500" stroke="#666" /><circle cx="6.500" cy="6.500" r="2.500" /></svg></Sq> },
    { i: <Sq><svg width="15" height="15" viewBox="0 0 15 15" fill="#fff" stroke="#d02020" strokeWidth="1.500"><circle cx="6" cy="6" r="4.500" /><path d="M9.500 9.500L14 14" strokeWidth="2.200" /></svg></Sq> },
    { i: <Sq><svg width="15" height="15" viewBox="0 0 15 15" fill="none" stroke="#4040c0"><path d="M1 14l5-6 3-1 5-6" strokeWidth="1.300" /><path d="M6 8l3-1" stroke="#c02020" /></svg></Sq> },
    { i: <Sq><svg width="15" height="15" viewBox="0 0 15 15" fill="#ddd" stroke="#c02020"><path d="M2 2h9v9H2z" /><circle cx="10" cy="10" r="3" /></svg></Sq> },
    { i: <Sq><svg width="15" height="15" viewBox="0 0 15 15" fill="#e8e8e8" stroke="#555"><path d="M1 3h13v5l-6 6-7-6z" /><path d="M4 3l2 5M9 8l4-6" stroke="#c09020" /></svg></Sq> },
  ],
];

const BAR4: Item[][] = [
  [{ i: <WLogo /> }],
  [{ i: <svg width="17" height="15" viewBox="0 0 17 15"><path d="M6 1h5v4h5v5h-5v4H6v-4H1V5h5z" fill="#e01818" /><path d="M5.500 4.500h6v6h-6z" fill="#2020c8" /></svg> }],
  [
    { t: "K>", c: "text-[#c81818]", s: md },
    { t: "K<", c: "text-[#c81818]", s: md },
    { t: "G<", c: "text-[#c86060]", s: "text-[11px] scale-x-[.85]" },
    { t: "H<", c: "text-[#c81818]", s: md },
  ],
  [
    { i: <div className="w-[18px] h-[18px] bg-[#1a7ab8] text-[#111] text-[9px] font-bold tracking-[-0.5px] flex items-center justify-center whitespace-nowrap">D-D</div> },
    { i: <div className="w-[18px] h-[18px] bg-[#28a8e0] text-[#2a4a90] text-[9px] font-bold tracking-[-0.5px] flex items-center justify-center whitespace-nowrap">U-G</div> },
  ],
  [{ i: <svg width="15" height="16" viewBox="0 0 15 16" fill="none" stroke="#4040a0"><path d="M2 2h9l3 6-2 7H3z" /><path d="M3 6l8 4" stroke="#c02020" /></svg> }],
];

const Canvas = () => (
  <div className="relative w-[1206px] h-[540px] bg-black overflow-hidden shrink-0">
    <Drawing />
    <Floating className="left-[83px] top-[18px] w-[659px] h-[22px]" groups={BAR1} />
    <Floating className="left-[84px] top-[63px] w-[292px] h-[22px]" groups={BAR2} />
    <Floating className="left-[775px] top-[21px] w-[156px] h-[21px]" groups={BAR3} />
    <Floating className="left-[942px] top-[18px] w-[237px] h-[21px]" groups={BAR4} />
  </div>
);

const VScroll = () => (
  <div className="w-[17px] h-[540px] shrink-0 bg-[#e9e9e9] border-r border-[#bbb] flex flex-col items-center">
    <div className="h-[18px] flex items-center justify-center">
      <div className="w-0 h-0 border-x-[4px] border-b-[4px] border-x-transparent border-b-[#333]" />
    </div>
    <div className="w-[14px] h-[14px] bg-gradient-to-b from-[#fafafa] to-[#cfcfcf] border border-[#aaa] rounded-[2px]" />
    <div className="flex-1" />
    <div className="h-[12px] flex items-center justify-center">
      <div className="w-0 h-0 border-x-[4px] border-t-[4px] border-x-transparent border-t-[#333]" />
    </div>
  </div>
);

const Arrow = ({ dir }: { dir: "l" | "r" }) =>
  dir === "l" ? (
    <div className="w-0 h-0 border-y-[4px] border-r-[4px] border-y-transparent border-r-[#444]" />
  ) : (
    <div className="w-0 h-0 border-y-[4px] border-l-[4px] border-y-transparent border-l-[#444]" />
  );

const Tabs = () => (
  <div className="h-[17px] shrink-0 bg-[#f1f1f1] flex items-center text-[11.500px]">
    <div className="w-[62px] pl-[5px] flex items-center gap-[9px] shrink-0">
      <div className="flex items-center gap-px"><div className="w-px h-[8px] bg-[#444]" /><Arrow dir="l" /></div>
      <Arrow dir="l" />
      <Arrow dir="r" />
      <div className="flex items-center gap-px"><Arrow dir="r" /><div className="w-px h-[8px] bg-[#444]" /></div>
    </div>
    <div className="h-full w-[38px] bg-black text-white flex items-center justify-center tracking-[-0.5px] shrink-0 [clip-path:polygon(0_0,100%_0,92%_100%,8%_100%)]">Model</div>
    <div className="h-full ml-[5px] w-[52px] border-r border-[#555] -skew-x-12 flex items-center justify-center shrink-0">
      <span className="skew-x-12 text-[#222] tracking-[-0.5px]">Layout1</span>
    </div>
    <div className="ml-[640px] w-[403px] h-full bg-[#e3e3e3] border-l border-[#aaa] rounded-l-[3px] flex items-center pl-[7px] pr-[2px] shrink-0">
      <Arrow dir="l" />
      <div className="ml-[185px] w-[14px] h-[15px] bg-gradient-to-b from-[#e8e8e8] to-[#c4c4c4] border border-[#bbb] rounded-[2px]" />
      <div className="flex-1" />
      <Arrow dir="r" />
    </div>
  </div>
);

const CommandLine = () => (
  <div className="h-[45px] shrink-0 flex bg-[#fafafa] font-['Liberation_Mono',monospace] text-[12.500px] text-[#333]">
    <div className="w-[15px] shrink-0 bg-[#9a9a9a] flex justify-center pt-[4px]">
      <div className="w-[10px] h-[3px] border-y border-dotted border-[#eee]" />
    </div>
    <div className="flex-1 flex flex-col">
      <div className="h-[27px] flex border-b-2 border-[#cfcfcf]">
        <span className="pt-[2px] pl-px leading-[16px]">Selecione ponto ou ENTER para FIM ...</span>
        <div className="ml-auto w-[15px] bg-[#eeeeee] flex flex-col items-center justify-center gap-[6px]">
          <div className="w-0 h-0 border-x-[4px] border-b-[4px] border-x-transparent border-b-[#555]" />
          <div className="w-0 h-0 border-x-[4px] border-t-[4px] border-x-transparent border-t-[#7a2a2a]" />
        </div>
      </div>
      <div className="flex-1 flex items-center pl-px">
        <span className="leading-[14px] pt-[4px]">Selecione o 1o. ponto :</span>
        <div className="ml-auto mr-[14px] w-[66px] h-[16px] bg-[#e2e2e2] flex items-center pl-[8px] pr-[6px] justify-between">
          <Arrow dir="l" />
          <div className="w-[14px] h-[15px] bg-gradient-to-b from-[#eee] to-[#c4c4c4] border border-[#c8c8c8] mr-[10px]" />
          <Arrow dir="r" />
        </div>
      </div>
    </div>
  </div>
);

const Tog = ({ children, on }: { children: React.ReactNode; on?: boolean }) => (
  <div className={`w-[20.500px] h-full shrink-0 flex items-center justify-center border-r border-[#777] ${on ? "bg-[#a9cfe0]" : "bg-[#a9a9a9]"}`}>{children}</div>
);
const Cell = ({ children, w }: { children: React.ReactNode; w: string }) => (
  <div className={`${w} h-full shrink-0 flex items-center justify-center bg-[#a5a5a5] border-r border-[#777]`}>{children}</div>
);

const StatusBar = () => (
  <div className="h-[20px] shrink-0 bg-gradient-to-b from-[#858585] to-[#4f4f4f] flex items-center text-[12px] text-[#2a2a2a] whitespace-nowrap">
    <span className="w-[184px] pl-[12px] text-[11.500px] tracking-[-0.7px] shrink-0 text-[#333]">701397.570, 7506092.378, 0.000</span>
    <Tog><S size={14}><path d="M2 2v1M5 2v1M8 2v1M2 6v1M5 6v1M8 6v1M2 10v1M5 10v1M8 10v1M12 2v10" /></S></Tog>
    <Tog><S size={16}><path d="M2 2h12v12H2zM5 2v12M8 2v12M11 2v12M2 5h12M2 8h12M2 11h12" stroke="#222" /></S></Tog>
    <Tog><S size={14}><path d="M2 1v12h12" stroke="#444" strokeWidth="1.400" /></S></Tog>
    <Tog><S size={14}><circle cx="8" cy="8" r="5.500" /><path d="M2 12L12 3M2 12h12" /></S></Tog>
    <Tog on><S size={16}><path d="M3 3h11v11H3z" fill="#eef" stroke="#222" /><circle cx="2.500" cy="2.500" r="1.500" fill="#fff" stroke="#a06020" /></S></Tog>
    <Tog on><S size={14}><path d="M2 13L12 5M2 13h12" stroke="#555" /></S></Tog>
    <Tog on><S size={16}><path d="M2 2v12h12M2 14L9 7" stroke="#333" /><path d="M11 1l-2 4h3l-2 4" stroke="#e0a020" strokeWidth="1.500" /></S></Tog>
    <Tog><S size={14}><path d="M5 1v12M1 6h8" stroke="#222" strokeWidth="1.300" /><circle cx="10" cy="10" r="3" /></S></Tog>
    <Tog><S size={14}><path d="M8 1v13M1 8h14" stroke="#222" strokeWidth="1.500" /></S></Tog>
    <Tog on><S size={14}><path d="M3 1.500h10v13H3z" stroke="#222" strokeWidth="1.500" /><path d="M5.500 4.500h5v2h-5zM5.500 9h2M9 9h2M5.500 12h2M9 12h2" stroke="#222" /></S></Tog>
    <div className="flex-1" />
    <div className="h-full flex items-center">
      <Cell w="w-[40px]"><span className="tracking-[-0.3px]">MODEL</span></Cell>
      <Cell w="w-[21px]"><div className="w-[13px] h-[13px] bg-[#eee] border border-[#333] text-[8px] leading-[11px] text-center">A</div></Cell>
      <Cell w="w-[21px]"><div className="w-[15px] h-[11px] border border-[#333] bg-[#eee] flex"><div className="w-1/2 border-r border-[#333]" /></div></Cell>
      <div className="w-[10px] h-full" />
      <Cell w="w-[21px]"><Hand size={15} color="#333" /></Cell>
      <Cell w="w-[21px]"><Search size={15} color="#333" strokeWidth={2} /></Cell>
      <Cell w="w-[21px]"><S size={15}><circle cx="8" cy="8" r="6.500" fill="#ddd" /><path d="M6 5h4v6H6z" /></S></Cell>
      <Cell w="w-[21px]"><S size={15}><path d="M1 1h4v3H1zM6 1h4v3H6zM11 1h4v3h-4zM3 6h10v9H3z" /><path d="M6 8l4 2.500L6 13z" fill="#222" /></S></Cell>
      <div className="w-[10px] h-full" />
      <Cell w="w-[57px]">
        <S size={14}><path d="M8 1v6L2 14M8 7l6 7" stroke="#222" strokeWidth="1.300" /></S>
        <span className="mx-[3px]">1:1</span>
        <Caret w="w-[7px]" color="border-t-[#222]" />
      </Cell>
      <Cell w="w-[20px]"><S size={14}><path d="M7 1v6L2 14M7 7l5 7" stroke="#444" strokeWidth="1.300" /><circle cx="11" cy="9" r="2" fill="#f0c020" stroke="#c09010" /></S></Cell>
      <Cell w="w-[20px]"><S size={14}><path d="M7 1v6L2 14M7 7l5 7" stroke="#777" strokeWidth="1.300" /></S></Cell>
      <div className="w-[6px] h-full" />
      <Cell w="w-[107px]">
        <Settings size={15} color="#444" />
        <span className="mx-[3px] tracking-[-1px]">AutoCAD Classic</span>
        <Caret w="w-[8px]" color="border-t-[#222]" />
      </Cell>
      <Cell w="w-[21px]"><Lock size={14} color="#333" /></Cell>
      <div className="w-[8px] h-full flex items-center justify-center"><Caret w="w-[8px]" color="border-t-[#222]" /></div>
      <div className="w-[20px] h-[16px] ml-[2px] border border-[#444] bg-[#ccc] flex"><div className="w-1/2 border-r border-[#444]" /></div>
    </div>
  </div>
);

const AppButton = () => (
  <div className="absolute left-0 top-0 w-[38px] h-[45px] bg-gradient-to-b from-[#8f8f8f] to-[#555] flex items-center justify-center">
    <svg width="34" height="38" viewBox="0 0 34 38">
      <path d="M14 3L2 34l10-2 3-7 6 3 1 8h7L19 3z" fill="#b5161a" />
      <path d="M14 3l-6 17 9-2 2 10 2 8h8L19 3z" fill="#d8342c" />
      <path d="M26 18h6l-3 4z" fill="#eee" />
    </svg>
  </div>
);

const App = () => (
  <div className="relative w-[1280px] h-[720px] overflow-hidden flex flex-col bg-[#626262] font-['Liberation_Sans',Arial,sans-serif]">
    <TitleBar />
    <MenuBar />
    <div className="h-[54px] shrink-0 bg-gradient-to-b from-[#5f5f5f] to-[#555]">
      <Row1 />
      <Row2 />
    </div>
    <div className="flex h-[557px] shrink-0">
      <LeftBar />
      <div className="w-[1223px] shrink-0 flex flex-col">
        <div className="flex">
          <Canvas />
          <VScroll />
        </div>
        <Tabs />
      </div>
      <RightBar />
    </div>
    <div className="h-[3px] shrink-0 bg-[#5a5a5a]" />
    <CommandLine />
    <StatusBar />
    <AppButton />
  </div>
);

export default App;
